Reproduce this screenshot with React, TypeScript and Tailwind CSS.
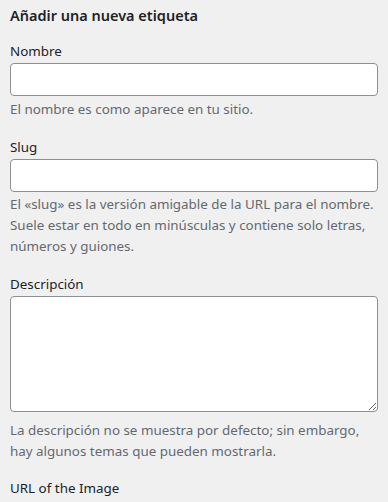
export default function App() {
  return (
    <div className="min-h-[502px] w-[388px] bg-[#f0f0f1] px-[10px] text-[13.4px] text-[#1d2327]" style={{ fontFamily: '"Noto Sans", sans-serif' }}>
      <h2 className="pt-[5px] text-[14.5px] font-semibold leading-[21px]">Añadir una nueva etiqueta</h2>
      <div className="mt-[15px]">
        <label className="block leading-[21px]">Nombre</label>
        <input type="text" className="mt-px block h-[33px] w-full rounded-[4px] border border-[#8c8f94] bg-white" />
        <p className="mt-[3px] leading-[21px] text-[#646970]">El nombre es como aparece en tu sitio.</p>
      </div>
      <div className="mt-[17px]">
        <label className="block leading-[21px]">Slug</label>
        <input type="text" className="mt-px block h-[33px] w-full rounded-[4px] border border-[#8c8f94] bg-white" />
        <p className="mt-[2px] leading-[21px] text-[#646970]">El «slug» es la versión amigable de la URL para el nombre. Suele estar en todo en minúsculas y contiene solo letras, números y guiones.</p>
      </div>
      <div className="mt-[17px]">
        <label className="block leading-[21px]">Descripción</label>
        <textarea className="mt-[1px] block h-[116px] w-full rounded-[4px] border border-[#8c8f94] bg-white" />
        <p className="mt-[8px] leading-[21px] text-[#646970]">La descripción no se muestra por defecto; sin embargo, hay algunos temas que pueden mostrarla.</p>
      </div>
      <div className="mt-[16px]">
        <label className="block leading-[21px]">URL of the Image</label>
      </div>
    </div>
  );
}
